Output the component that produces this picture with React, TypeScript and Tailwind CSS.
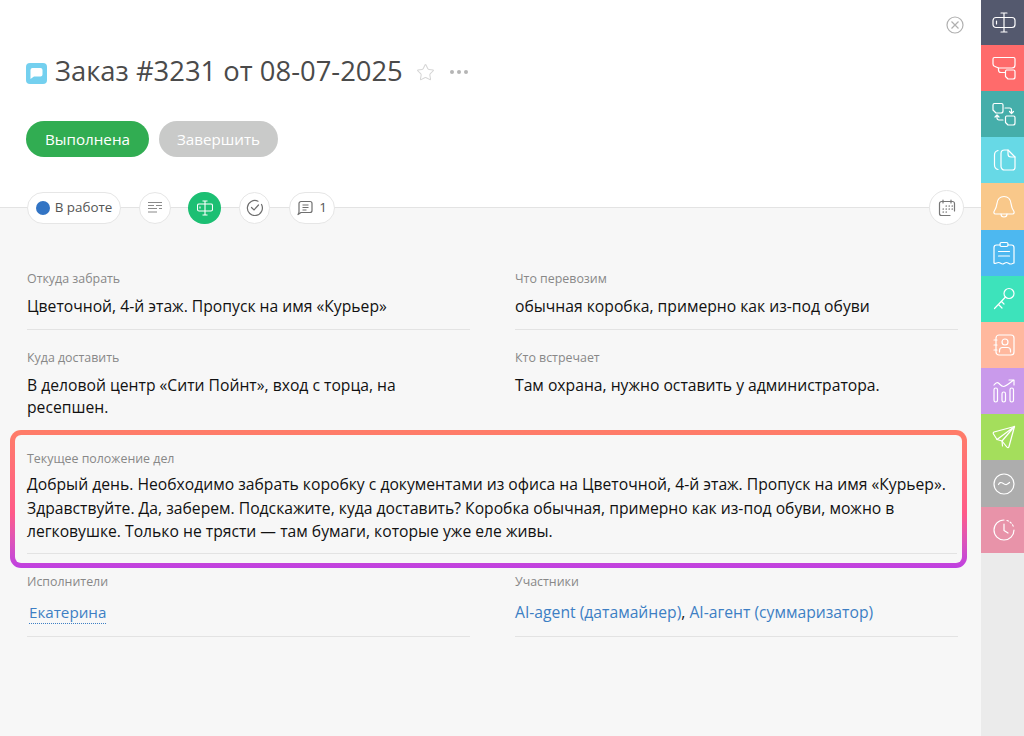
import type { ReactNode } from "react";
import { Star } from "lucide-react";

function Ico({ children, size = 24, className = "" }: { children: ReactNode; size?: number; className?: string }) {
  return (
    <svg width={size} height={size} viewBox={`0 0 ${size} ${size}`} fill="none" stroke="currentColor" strokeWidth="1.2" strokeLinecap="round" strokeLinejoin="round" className={className}>
      {children}
    </svg>
  );
}

const railItems: { color: string; h: string; icon: ReactNode }[] = [
  {
    color: "bg-[#54596e]",
    h: "h-[45px]",
    icon: (
      <Ico>
        <rect x="1" y="6.5" width="22" height="10" rx="3" />
        <path d="M12 2v19M9 2h6M9 21h6M4.500 10v3" />
      </Ico>
    ),
  },
  {
    color: "bg-[#ff6b6b]",
    h: "h-[46px]",
    icon: (
      <Ico>
        <path d="M2.500 1.500h19a1.500 1.500 0 0 1 1.500 1.500v6a3 3 0 0 1-3 3H6.500L3 10.500A2.500 2.500 0 0 1 1 8V3a1.500 1.500 0 0 1 1.500-1.500z" />
        <path d="M6.500 12v2a2.500 2.500 0 0 0 2.500 2.500h4" />
        <path d="M14.500 14h7a1.500 1.500 0 0 1 1.500 1.500V21a2 2 0 0 1-2 2h-5l-2.500-2.500V15.500a1.500 1.500 0 0 1 1-1.500z" />
      </Ico>
    ),
  },
  {
    color: "bg-[#45aeaa]",
    h: "h-[46px]",
    icon: (
      <Ico>
        <path d="M2.500 1.500h7a1.500 1.500 0 0 1 1.500 1.500v6a2 2 0 0 1-2 2H4l-3-3V3a1.500 1.500 0 0 1 1.500-1.500z" />
        <path d="M14.500 14h7a1.500 1.500 0 0 1 1.500 1.500V21a2 2 0 0 1-2 2h-5l-2.500-2.500V15.500a1.500 1.500 0 0 1 1-1.500z" />
        <path d="M13 6h4.500a2 2 0 0 1 2 2v3M17.500 9.500l2 2 2-2" />
        <path d="M11 18H7a2 2 0 0 1-2-2v-2.500M3 15l2-2 2 2" />
      </Ico>
    ),
  },
  {
    color: "bg-[#67d9e6]",
    h: "h-[46px]",
    icon: (
      <Ico>
        <path d="M12.500 2H16l7 7v10.500a2.500 2.500 0 0 1-2.500 2.500h-8A3.500 3.500 0 0 1 9 18.500v-13A3.500 3.500 0 0 1 12.500 2z" />
        <path d="M16 2v4a3 3 0 0 0 3 3h4" />
        <path d="M6 2.500C4 3 2.500 5 2.500 7v10c0 2 1.500 4 3.500 4.500" />
      </Ico>
    ),
  },
  {
    color: "bg-[#f9c88a]",
    h: "h-[47px]",
    icon: (
      <Ico>
        <path d="M12 1.500c-4.500 0-6.500 3-7 7-.5 3.500-1 5-2.700 7.500-.9 1.300-.4 3 1.200 3h17c1.600 0 2.100-1.700 1.200-3C19.900 13.500 19.500 12 19 8.500c-.5-4-2.500-7-7-7z" />
        <path d="M9 19a3 3 0 0 0 6 0" />
      </Ico>
    ),
  },
  {
    color: "bg-[#4db8f0]",
    h: "h-[46px]",
    icon: (
      <Ico>
        <path d="M8 4H4.500A2.500 2.500 0 0 0 2 6.500V22c1.700 1.300 2.700-.5 4.500-.5s2.500 1.500 4 1.500 2.500-1.500 4-1.500 2.500 1.500 4 1.500 2.500-1 3.500-1V6.500A2.500 2.500 0 0 0 19.500 4H16" />
        <rect x="8" y="1.500" width="8" height="4" rx="1.500" />
        <path d="M6.500 10.500h11M6.500 15h11" />
      </Ico>
    ),
  },
  {
    color: "bg-[#3de3bb]",
    h: "h-[46px]",
    icon: (
      <Ico>
        <circle cx="17" cy="6.500" r="5" />
        <path d="M13.500 10L2.500 21.500M6.500 17.500l3.500 3.500M9.500 14.500l2.500 2.500" />
      </Ico>
    ),
  },
  {
    color: "bg-[#ffb89e]",
    h: "h-[46px]",
    icon: (
      <Ico>
        <rect x="4" y="2" width="18" height="20" rx="3" />
        <circle cx="13" cy="9" r="3" />
        <path d="M7.500 19v-1.500a3 3 0 0 1 3-3h5a3 3 0 0 1 3 3V19M2 7h3M2 12h3M2 17h3" />
      </Ico>
    ),
  },
  {
    color: "bg-[#c99aeb]",
    h: "h-[46px]",
    icon: (
      <Ico>
        <rect x="2" y="9" width="3.500" height="14" rx="1.700" />
        <rect x="10" y="13" width="3.500" height="10" rx="1.700" />
        <rect x="18" y="9" width="3.500" height="14" rx="1.700" />
        <path d="M2 6c2-2.500 3.500-3 5-1.500s2.500 3 4.500 3 5-2.500 10-6.500M17 1h5v5" />
      </Ico>
    ),
  },
  {
    color: "bg-[#a4de5c]",
    h: "h-[46px]",
    icon: (
      <Ico>
        <path d="M2 7L22.500 1.500 17 21.500c-.3 1.200-1.500 1.400-2.200.5L10 16 5 14.500 1.500 9c-.4-.7-.2-1.600.5-2z" />
        <path d="M22.500 1.500L10 16l.5 5M22.500 1.500L5 14.500" />
      </Ico>
    ),
  },
  {
    color: "bg-[#adadad]",
    h: "h-[47px]",
    icon: (
      <Ico>
        <circle cx="12" cy="12" r="10" />
        <path d="M6.500 12.500c1-2 2.500-2.500 4-1.500s3 2 4 1.500 2-1 3-2" />
      </Ico>
    ),
  },
  {
    color: "bg-[#e893a9]",
    h: "h-[46px]",
    icon: (
      <Ico>
        <path d="M12 2a10 10 0 1 0 10 10" />
        <path d="M15 2.500a10 10 0 0 1 6.500 6.500" strokeDasharray="1.500 2" />
        <path d="M12 6v6.500l4 2.500" />
      </Ico>
    ),
  },
];

function Pill({ children, className = "" }: { children: ReactNode; className?: string }) {
  return (
    <div className={`flex h-[32px] items-center justify-center rounded-full border border-[#e6e6e6] bg-white text-[#555] ${className}`}>
      {children}
    </div>
  );
}

function Field({ label, children }: { label: string; children: ReactNode }) {
  return (
    <div>
      <div className="text-[12.4px] leading-[16px] text-[#888]">{label}</div>
      <div className="mt-[8px] text-[15.7px] leading-[22px] text-[#111]">{children}</div>
    </div>
  );
}

export default function App() {
  return (
    <div className="flex h-[736px] w-[1024px] overflow-hidden bg-[#f7f7f7] font-['Open_Sans','Noto_Sans',sans-serif]">
      <main className="relative flex min-w-0 flex-1 flex-col">
        <header className="h-[208px] border-b border-[#e3e3e3] bg-white pl-[26px]">
          <div className="flex justify-end pt-[16px] pr-[17px]">
            <svg width="18" height="18" viewBox="0 0 18 18" fill="none" stroke="#b0b0b0" strokeWidth="1.200">
              <circle cx="9" cy="9" r="8" />
              <path d="M5.500 5.500l7 7M12.500 5.500l-7 7" />
            </svg>
          </div>
          <div className="mt-[20px] flex h-[34px] items-center">
            <svg width="21" height="21" viewBox="0 0 21 21" className="mt-[4px] shrink-0">
              <rect width="21" height="21" rx="4" fill="#74d0ef" />
              <path d="M6.500 5h8a2 2 0 0 1 2 2v4.500a2 2 0 0 1-2 2H8l-3.500 2.500V7a2 2 0 0 1 2-2z" fill="#fff" />
            </svg>
            <h1 className="ml-[8px] text-[27.4px] leading-[34px] font-normal whitespace-nowrap text-[#4a4a4a]">Заказ #3231 от 08-07-2025</h1>
            <Star className="ml-[13px] mt-[2px] text-[#d5d5d5]" size={19} strokeWidth={1.300} />
            <div className="ml-[15px] mt-[2px] flex gap-[3px]">
              <span className="h-[4px] w-[4px] rounded-full bg-[#b5b5b5]" />
              <span className="h-[4px] w-[4px] rounded-full bg-[#b5b5b5]" />
              <span className="h-[4px] w-[4px] rounded-full bg-[#b5b5b5]" />
            </div>
          </div>
          <div className="mt-[33px] flex gap-[10px]">
            <button className="flex h-[36px] w-[123px] items-center justify-center rounded-full bg-[#31ad52] text-[15.2px] text-white">Выполнена</button>
            <button className="flex h-[36px] w-[119px] items-center justify-center rounded-full bg-[#c9cac9] text-[15.2px] text-white">Завершить</button>
          </div>
          <div className="relative z-10 mt-[33px] flex items-center pl-[1px]">
            <Pill className="w-[94px] gap-[5px] text-[13.4px] text-[#333]">
              <span className="h-[14px] w-[14px] rounded-full bg-[#3274c4]" />
              В работе
            </Pill>
            <Pill className="ml-[18px] w-[32px]">
              <svg width="16" height="14" viewBox="0 0 16 14" stroke="#8a8a8a" strokeWidth="1.200" fill="none">
                <path d="M1 1.500h14M1 4.500h6M9 4.500h6M1 7.500h9M12 7.500h3M1 11h9" />
              </svg>
            </Pill>
            <div className="ml-[17px] flex h-[32px] w-[33px] items-center justify-center rounded-full bg-[#1cbf73] text-white">
              <svg width="16" height="16" viewBox="0 0 16 16" fill="none" stroke="currentColor" strokeWidth="1.100">
                <rect x="0.500" y="4" width="15" height="7" rx="1.500" />
                <path d="M8 1v14M5.500 1h5M5.500 15h5M3 6.500v2" />
              </svg>
            </div>
            <Pill className="ml-[18px] w-[31px]">
              <svg width="17" height="17" viewBox="0 0 17 17" fill="none" stroke="#6f6f6f" strokeWidth="1.200" strokeLinecap="round">
                <path d="M15.500 5.500A7.500 7.500 0 1 1 12 2.200" />
                <path d="M5.500 8.500l2.500 2.500 4.500-5" />
              </svg>
            </Pill>
            <Pill className="ml-[19px] w-[46px] gap-[6px] text-[13.4px]">
              <svg width="16" height="16" viewBox="0 0 16 16" fill="none" stroke="#6f6f6f" strokeWidth="1.200" strokeLinejoin="round">
                <path d="M4 1.500h9a2 2 0 0 1 2 2v7a2 2 0 0 1-2 2H4L1 14.500c1-1 1-2 1-3V3.500a2 2 0 0 1 2-2z" />
                <path d="M5.500 5h6M5.500 7.500h6M5.500 10h4" />
              </svg>
              1
            </Pill>
            <div className="ml-auto mr-[17px] flex h-[35px] w-[35px] items-center justify-center rounded-full border border-[#e6e6e6] bg-white">
              <svg width="18" height="18" viewBox="0 0 18 18" fill="none" stroke="#777" strokeWidth="1.200" strokeLinecap="round">
                <path d="M16.500 12V4.500a2 2 0 0 0-2-2h-11a2 2 0 0 0-2 2v10a2 2 0 0 0 2 2H12" />
                <path d="M5 1v3M13 1v3" />
                <path d="M8 7h.5M11 7h.5M14 7h.5M5 10h.5M8 10h.5M11 10h.5M14 10h.5M5 13h.5M8 13h.5" stroke="#555" />
              </svg>
            </div>
          </div>
        </header>

        <section className="grid grid-cols-[443px_443px] gap-x-[45px] pl-[27px] pt-[63px]">
          <div className="h-[59px] border-b border-[#e3e3e3]">
            <Field label="Откуда забрать">Цветочной, 4-й этаж. Пропуск на имя «Курьер»</Field>
          </div>
          <div className="h-[59px] border-b border-[#e3e3e3]">
            <Field label="Что перевозим">обычная коробка, примерно как из-под обуви</Field>
          </div>
          <div className="mt-[20px] h-[80px]">
            <Field label="Куда доставить">
              В деловой центр «Сити Пойнт», вход с торца, на
              <br />
              ресепшен.
            </Field>
          </div>
          <div className="mt-[20px] h-[80px]">
            <Field label="Кто встречает">Там охрана, нужно оставить у администратора.</Field>
          </div>
        </section>

        <div className="ml-[10px] h-[138px] w-[957px] rounded-[11px] bg-gradient-to-b from-[#ff7d68] via-[#ff5a88] via-[60%] to-[#bf3fe2] p-[5px]">
          <div className="h-[128px] rounded-[6px] bg-[#f7f7f7] pl-[12px] pr-[5px] pt-[16px]">
            <div className="h-[103px] border-b border-[#e3e3e3]">
              <Field label="Текущее положение дел">
                <span className="-mt-[2px] block leading-[23.5px] whitespace-nowrap">
                  Добрый день. Необходимо забрать коробку с документами из офиса на Цветочной, 4-й этаж. Пропуск на имя «Курьер».
                  <br />
                  Здравствуйте. Да, заберем. Подскажите, куда доставить? Коробка обычная, примерно как из-под обуви, можно в
                  <br />
                  легковушке. Только не трясти — там бумаги, которые уже еле живы.
                </span>
              </Field>
            </div>
          </div>
        </div>

        <section className="grid grid-cols-[443px_443px] gap-x-[45px] pl-[27px] pt-[6px]">
          <div className="h-[63px] border-b border-[#e3e3e3]">
            <Field label="Исполнители">
              <div className="pt-[3px]">
                <span className="ml-[2px] border-b border-dotted border-[#3d7fc4] pb-[1px] text-[15.2px] text-[#3d7fc4]">Екатерина</span>
              </div>
            </Field>
          </div>
          <div className="h-[63px] border-b border-[#e3e3e3]">
            <Field label="Участники">
              <div className="pt-[3px]">
                <span className="text-[#3d7fc4]">AI-agent (датамайнер)</span>, <span className="text-[#3d7fc4]">AI-агент (суммаризатор)</span>
              </div>
            </Field>
          </div>
        </section>
      </main>

      <nav className="w-[43px] shrink-0 bg-[#ebebeb]">
        {railItems.map((item, i) => (
          <div key={i} className={`flex items-center justify-center pl-[3px] text-white ${item.color} ${item.h}`}>
            {item.icon}
          </div>
        ))}
      </nav>
    </div>
  );
}
